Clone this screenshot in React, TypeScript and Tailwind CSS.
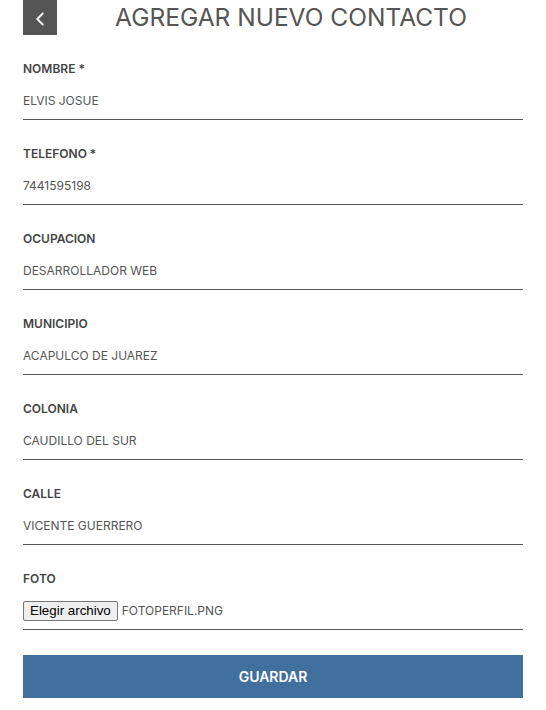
import { ChevronLeft } from "lucide-react";

const fields = [
  { label: "NOMBRE *", value: "ELVIS JOSUE" },
  { label: "TELEFONO *", value: "7441595198" },
  { label: "OCUPACION", value: "DESARROLLADOR WEB" },
  { label: "MUNICIPIO", value: "ACAPULCO DE JUAREZ" },
  { label: "COLONIA", value: "CAUDILLO DEL SUR" },
  { label: "CALLE", value: "VICENTE GUERRERO" },
];

export default function App() {
  return (
    <div className="min-h-[710px] bg-white px-[23px] font-['Inter',sans-serif] text-[#555]">
      <div className="flex h-[35px] items-center">
        <button className="flex h-[35px] w-[34px] items-center justify-center bg-[#555] pt-[2px] text-white">
          <ChevronLeft size={22} strokeWidth={2} />
        </button>
        <h1 className="flex-1 pl-[2px] text-center text-[24.5px] font-normal leading-none text-[#555]">
          AGREGAR NUEVO CONTACTO
        </h1>
      </div>

      <form>
        {fields.map((f) => (
          <div key={f.label} className="pt-[26px]">
            <label className="block text-[12px] font-semibold leading-4 text-[#444]">{f.label}</label>
            <input
              readOnly
              value={f.value}
              className="mt-[7px] block h-[36px] w-full border-b border-[#555] pb-[2px] text-[12px] text-[#555] outline-none"
            />
          </div>
        ))}

        <div className="pt-[26px]">
          <label className="block text-[12px] font-semibold leading-4 text-[#444]">FOTO</label>
          <div className="mt-[7px] flex h-[36px] items-center border-b border-[#555] pb-[2px]">
            <span className="rounded-[2px] border border-[#767676] bg-[#efefef] px-[6px] py-[1px] font-['Liberation_Sans',sans-serif] text-[13.33px] leading-4 text-black">
              Elegir archivo
            </span>
            <span className="ml-[4px] text-[12px] text-[#555]">FOTOPERFIL.PNG</span>
          </div>
        </div>

        <button
          type="button"
          className="mt-[25px] block h-[43px] w-full bg-[#41709f] text-[14px] font-semibold text-white"
        >
          GUARDAR
        </button>
      </form>
    </div>
  );
}
